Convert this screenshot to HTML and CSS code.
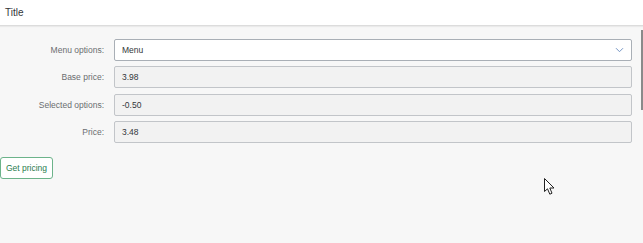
FILE: index.html
```html
<!DOCTYPE html>
<html lang="en">
<head>
    <meta charset="UTF-8">
    <meta name="viewport" content="width=device-width, initial-scale=1.0">
    <title>Pricing</title>
    <link rel="stylesheet" href="styles.css">
</head>
<body>
    <div class="header">Title</div>

    <form class="pricing">
        <label class="lbl" for="menu">Menu options:</label>
        <div class="field select" id="menu">
            <span>Menu</span>
            <svg class="chevron" width="9" height="6" viewBox="0 0 9 6">
                <path d="M1 1.2 L4.5 4.7 L8 1.2" fill="none" stroke="#7595c4" stroke-width="1"/>
            </svg>
        </div>

        <label class="lbl">Base price:</label>
        <div class="field">3.98</div>

        <label class="lbl">Selected options:</label>
        <div class="field">-0.50</div>

        <label class="lbl">Price:</label>
        <div class="field">3.48</div>
    </form>

    <button class="btn" type="button">Get pricing</button>

    <div class="scroll-thumb"></div>

    <svg class="cursor" width="12" height="18" viewBox="0 0 12 18">
        <path d="M0.5 0.5 L0.5 13.5 L3.5 10.8 L5.8 16.2 L8 15.2 L5.8 10 L10 10 Z" fill="#fff" stroke="#222" stroke-width="1"/>
    </svg>
</body>
</html>
```

FILE: styles.css
```css
body {
    margin: 0;
    height: 243px;
    background: #f7f7f7;
    font-family: "Liberation Sans", Arial, sans-serif;
    color: #32363a;
    position: relative;
    overflow: hidden;
}
.header {
    height: 25px;
    line-height: 26px;
    padding-left: 5px;
    background: #fff;
    border-bottom: 1px solid #dcdcdc;
    box-shadow: 0 1px 1px rgba(0, 0, 0, 0.05);
    font-size: 10px;
    color: #32363a;
}
.pricing {
    display: grid;
    grid-template-columns: 104px 518px;
    column-gap: 10px;
    row-gap: 5.4px;
    margin-top: 13px;
}
.lbl {
    font-size: 8.5px;
    color: #6a6d70;
    text-align: right;
    align-self: center;
}
.field {
    box-sizing: border-box;
    height: 22px;
    padding-left: 7px;
    display: flex;
    align-items: center;
    font-size: 8.5px;
    color: #32363a;
    background: #f2f2f2;
    border: 1px solid #c2c5c9;
    border-radius: 2px;
}
.select {
    background: #fff;
    border-color: #a9afb6;
    justify-content: space-between;
    padding-right: 7px;
}
.btn {
    margin-top: 14px;
    width: 53px;
    height: 22px;
    padding: 0;
    background: #fff;
    border: 1px solid #6cb38a;
    border-radius: 3px;
    color: #2b7c4f;
    font-family: "Liberation Sans", Arial, sans-serif;
    font-size: 8.5px;
}
.scroll-thumb {
    position: absolute;
    right: 0;
    top: 30px;
    width: 2px;
    height: 80px;
    background: #8a8a8a;
}
.cursor {
    position: absolute;
    left: 544px;
    top: 178px;
}
```
